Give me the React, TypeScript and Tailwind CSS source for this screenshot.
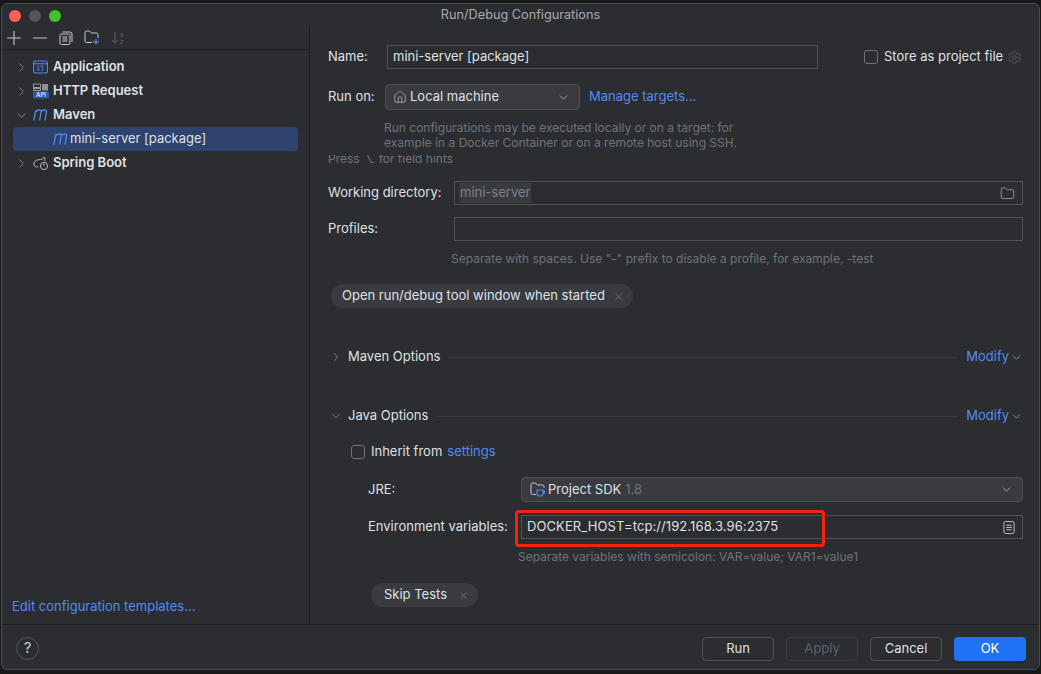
import { ChevronDown, ChevronRight, Folder, House, Minus, Plus, Settings, X } from 'lucide-react';
import type { ReactNode } from 'react';

const inputClass = 'h-[24px] border border-[#4e5157] bg-[#2b2d30] flex items-center';

function MavenIcon({ className }: { className?: string }) {
  return (
    <svg viewBox="0 0 16 12" className={className} fill="none" stroke="#548af7" strokeWidth="1.3">
      <path d="M0.800 11.500 2.800 1.500" />
      <path d="M2.800 2.500C4.500 .6 8.600 .2 8.100 3L6.600 11.500" />
      <path d="M8.200 2.500C9.900 .6 14 .2 13.500 3L12 11.500" />
    </svg>
  );
}

function ApplicationIcon() {
  return (
    <svg viewBox="0 0 16 14" className="w-[15px] h-[14px]" fill="none">
      <rect x="0.600" y="0.600" width="14.800" height="12.800" rx="2" fill="#25324d" stroke="#548af7" strokeWidth="1.100" />
      <path d="M1 3.500h14" stroke="#548af7" strokeWidth="1.100" />
      <path d="M4 6h2M8 6h3M5 8h2M9 8h2M4 10h3M9 10h2" stroke="#8a93a6" strokeWidth="1" />
    </svg>
  );
}

function HttpIcon() {
  return (
    <svg viewBox="0 0 16 16" className="w-[16px] h-[16px]">
      <path d="M0.500 1h7v3.500h-7zM0.500 5.500h7v2h-7z" fill="none" stroke="#b4b8bf" strokeWidth="0.800" />
      <rect x="9" y="1" width="6" height="6.500" fill="#8c9097" />
      <rect x="0" y="8.600" width="16" height="7" rx="0.500" fill="#2e5aa8" />
      <text x="8" y="14.200" textAnchor="middle" fontSize="6" fontWeight="700" fontFamily="Inter, sans-serif" fill="#c9d8f5">API</text>
    </svg>
  );
}

function SpringIcon() {
  return (
    <svg viewBox="0 0 16 14" className="w-[16px] h-[14px]" fill="none" stroke="#b4b8bf" strokeWidth="1">
      <path d="M1 9c-.6-3 2-5.300 5-5.300 2.500 0 4.500-1 5.300-2.700.7 1.500.8 3 .4 4.300" />
      <path d="M1 9c.5 1.500 2 2 4 1.800" />
      <circle cx="11" cy="10" r="3.600" />
      <path d="M11 7.600V10" />
    </svg>
  );
}

function TreeRow({ label, icon, open }: { label: string; icon: ReactNode; open?: boolean }) {
  return (
    <div className="h-[24px] flex items-center pl-[12px] text-[13px] font-semibold text-[#dfe1e5]">
      <span className="w-[19px] flex justify-start">
        {open
          ? <ChevronDown size={15} strokeWidth={1.2} className="text-[#9da0a8]" />
          : <ChevronRight size={15} strokeWidth={1.2} className="text-[#9da0a8]" />}
      </span>
      <span className="w-[20px] flex items-center">{icon}</span>
      <span>{label}</span>
    </div>
  );
}

function Chip({ label, className }: { label: string; className: string }) {
  return (
    <div className={`h-[24px] rounded-full bg-[#393b40] flex items-center text-[13px] text-[#dfe1e5] pr-[9px] w-fit ${className}`}>
      <span>{label}</span>
      <X size={11} strokeWidth={1.2} className="text-[#8c8f96]" />
    </div>
  );
}

function Section({ label, open, className }: { label: string; open?: boolean; className: string }) {
  return (
    <div className={`h-[20px] flex items-center text-[13px] text-[#dfe1e5] ${className}`}>
      <span className="w-[20px] flex">
        {open
          ? <ChevronDown size={14} strokeWidth={1.2} className="text-[#9da0a8] ml-px" />
          : <ChevronRight size={14} strokeWidth={1.2} className="text-[#9da0a8] ml-px" />}
      </span>
      <span>{label}</span>
      <span className="flex-1 h-px bg-[#393b40] mx-[8px]" />
      <span className="text-[#548af7]">Modify</span>
      <ChevronDown size={13} strokeWidth={1.5} className="text-[#9da0a8] ml-px" />
    </div>
  );
}

function Button({ label, className }: { label: string; className: string }) {
  return (
    <div className={`w-[72px] h-[24px] rounded-[4px] flex items-center justify-center text-[13px] ${className}`}>{label}</div>
  );
}

export default function App() {
  return (
    <div className="w-[1041px] h-[674px] bg-[#17181a] pt-[3px] pl-[1px] pr-[1px] overflow-hidden font-['Inter',sans-serif] text-[13px]">
      <div className="h-[667px] rounded-[6px] border border-[#4a4c50] bg-[#2b2d30] flex flex-col overflow-hidden">
        {/* title bar */}
        <div className="h-[22px] shrink-0 grid grid-cols-[1fr_auto_1fr] items-center">
          <div className="flex gap-[8px] pt-[1px] pl-[7px]">
            <span className="w-[12px] h-[12px] rounded-full bg-[#ff5f57]" />
            <span className="w-[12px] h-[12px] rounded-full bg-[#55565a]" />
            <span className="w-[12px] h-[12px] rounded-full bg-[#3fc22e]" />
          </div>
          <div className="text-[12.700px] text-[#a8abb0]">Run/Debug Configurations</div>
          <div />
        </div>

        <div className="flex-1 flex min-h-0">
          {/* sidebar */}
          <div className="w-[308px] shrink-0 border-r border-[#1e1f22] flex flex-col">
            <div className="h-[24px] shrink-0 border-b border-[#1e1f22] flex items-center pl-[1px] text-[#c5c8ce]">
              <Plus size={22} strokeWidth={1.2} className="shrink-0" />
              <Minus size={22} strokeWidth={1.2} className="shrink-0 ml-[4px]" />
              <svg viewBox="0 0 14 14" className="w-[14px] h-[14px] ml-[8px]" fill="none" stroke="#c5c8ce" strokeWidth="1">
                <path d="M3.500 1h7.500a2 2 0 0 1 2 2v8" />
                <rect x="1" y="3" width="10" height="10.500" rx="1.500" />
                <path d="M3.500 6h5M3.500 8h5M3.500 10h5" />
              </svg>
              <svg viewBox="0 0 16 15" className="w-[16px] h-[15px] ml-[11px]" fill="none" stroke="#c5c8ce" strokeWidth="1">
                <path d="M8 12.500H2.500a1.500 1.500 0 0 1-1.500-1.500V2.500A1.500 1.500 0 0 1 2.500 1h3l2 2h5a1.500 1.500 0 0 1 1.500 1.500V8" />
                <path d="M12 9v5.500M9 11.800h6" stroke="#548af7" strokeWidth="1.200" />
              </svg>
              <svg viewBox="0 0 14 14" className="w-[14px] h-[14px] ml-[11px]" fill="none" stroke="#5f6268" strokeWidth="1">
                <path d="M4 1v11M1 9l3 3 3-3" />
                <text x="9" y="6" fontSize="6" fontFamily="Inter, sans-serif" stroke="none" fill="#5f6268">a</text>
                <text x="9" y="13" fontSize="6" fontFamily="Inter, sans-serif" stroke="none" fill="#5f6268">z</text>
              </svg>
            </div>
            <div className="flex-1 pt-[5px]">
              <TreeRow label="Application" icon={<ApplicationIcon />} />
              <TreeRow label="HTTP Request" icon={<HttpIcon />} />
              <TreeRow label="Maven" open icon={<MavenIcon className="w-[16px] h-[12px]" />} />
              <div className="h-[24px] mx-[11px] pl-[40px] rounded-[4px] bg-[#2e436e] flex items-center text-[13px] text-[#dfe1e5]">
                <MavenIcon className="w-[16px] h-[12px] mr-px" />
                <span>mini-server [package]</span>
              </div>
              <TreeRow label="Spring Boot" icon={<SpringIcon />} />
            </div>
            <div className="h-[39px] shrink-0 pl-[10px] pt-[4px] flex items-center text-[#548af7]">Edit configuration templates...</div>
          </div>

          {/* form */}
          <div className="flex-1 min-w-0 pl-[18px] pr-[16px]">
            <div className="mt-[19px] flex items-center">
              <span className="w-[59px] text-[#dfe1e5]">Name:</span>
              <div className={`${inputClass} w-[431px] pl-[5px] text-[#dfe1e5]`}>mini-server [package]</div>
              <span className="w-[14px] h-[14px] ml-[46px] shrink-0 rounded-[3px] border border-[#6f737a]" />
              <span className="ml-[6px] text-[#dfe1e5] whitespace-nowrap">Store as project file</span>
              <Settings size={15} strokeWidth={1} className="ml-[4px] shrink-0 text-[#6f737a]" />
            </div>

            <div className="mt-[15px] flex items-center">
              <span className="w-[57px] text-[#dfe1e5]">Run on:</span>
              <div className="w-[195px] h-[26px] rounded-[4px] border border-[#4e5157] bg-[#393b40] flex items-center pl-[7px] pr-[9px] text-[#dfe1e5]">
                <House size={14} strokeWidth={1.1} className="text-[#c5c8ce] mr-[3px]" />
                <span className="flex-1">Local machine</span>
                <ChevronDown size={13} strokeWidth={1.4} className="text-[#c5c8ce]" />
              </div>
              <span className="ml-[9px] text-[#548af7]">Manage targets...</span>
            </div>

            <div className="mt-[10px] ml-[56px] text-[12px] leading-[15px] text-[#6f737a]">
              <p>Run configurations may be executed locally or on a target: for</p>
              <p>example in a Docker Container or on a remote host using SSH.</p>
            </div>
            <div className="h-[11px] overflow-hidden flex items-end text-[12px] leading-[15px] text-[#6f737a] mt-[5px]">
              <span>Press ⌥ for field hints</span>
            </div>

            <div className="mt-[15px] flex items-center">
              <span className="w-[126px] text-[#dfe1e5]">Working directory:</span>
              <div className={`${inputClass} flex-1 pl-[4px] pr-[7px] justify-between`}>
                <span className="bg-[#393b40] text-[#7f828a] px-px">mini-server</span>
                <Folder size={15} strokeWidth={1} className="text-[#c5c8ce]" />
              </div>
            </div>

            <div className="mt-[12px] flex items-center">
              <span className="w-[126px] text-[#dfe1e5]">Profiles:</span>
              <div className={`${inputClass} flex-1`} />
            </div>

            <div className="mt-[10px] ml-[123px] text-[12px] leading-[15px] text-[#6f737a]">
              Separate with spaces. Use "-" prefix to disable a profile, for example, -test
            </div>

            <Chip label="Open run/debug tool window when started" className="mt-[18px] ml-[3px] pl-[11px] gap-[8px]" />

            <Section label="Maven Options" className="mt-[39px]" />
            <Section label="Java Options" open className="mt-[39px]" />

            <div className="mt-[16px] ml-[23px] flex items-center h-[20px]">
              <span className="w-[14px] h-[14px] rounded-[3px] border border-[#6f737a]" />
              <span className="ml-[6px] text-[#dfe1e5]">Inherit from</span>
              <span className="ml-[5px] text-[#548af7]">settings</span>
            </div>

            <div className="mt-[15px] ml-[40px] flex items-center">
              <span className="w-[153px] text-[#dfe1e5]">JRE:</span>
              <div className="flex-1 h-[25px] rounded-[4px] border border-[#4e5157] bg-[#393b40] flex items-center pl-[8px] pr-[9px] text-[#dfe1e5]">
                <svg viewBox="0 0 16 15" className="w-[16px] h-[15px] mr-[2px]" fill="none" stroke="#c5c8ce" strokeWidth="1">
                  <path d="M6 12.500H2.500A1.500 1.500 0 0 1 1 11V2.500A1.500 1.500 0 0 1 2.500 1h3l2 2h5A1.500 1.500 0 0 1 14 4.500V6" />
                  <path d="M7 8h6v3.500a2.500 2.500 0 0 1-2.500 2.500h-1A2.500 2.500 0 0 1 7 11.500zM13 9h1.500v2H13" stroke="#548af7" strokeWidth="1.200" />
                </svg>
                <span>Project SDK</span>
                <span className="ml-[4px] text-[#6f737a]">1.8</span>
                <span className="flex-1" />
                <ChevronDown size={13} strokeWidth={1.4} className="text-[#c5c8ce]" />
              </div>
            </div>

            <div className="mt-[13px] ml-[40px] flex items-center">
              <span className="w-[153px] text-[#dfe1e5]">Environment variables:</span>
              <div className="relative flex-1">
                <div className={`${inputClass} pl-[5px] pr-[7px] justify-between text-[#dfe1e5]`}>
                  <span className="tracking-[0.09px]">DOCKER_HOST=tcp://192.168.3.96:2375</span>
                  <svg viewBox="0 0 12 14" className="w-[12px] h-[13px]" fill="none" stroke="#c5c8ce" strokeWidth="1">
                    <rect x="0.500" y="0.500" width="11" height="13" rx="2" />
                    <path d="M3 4.500h6M3 7h6M3 9.500h6" />
                  </svg>
                </div>
                <div className="absolute left-[-6px] top-[-5px] w-[310px] h-[37px] rounded-[4px] border-[3px] border-[#f6220d]" />
              </div>
            </div>

            <div className="mt-[10px] ml-[190px] text-[12px] leading-[15px] text-[#6f737a]">
              Separate variables with semicolon: VAR=value; VAR1=value1
            </div>

            <Chip label="Skip Tests" className="mt-[19px] ml-[43px] pl-[13px] gap-[11px]" />
          </div>
        </div>

        {/* footer */}
        <div className="h-[45px] shrink-0 border-t border-[#1e1f22] flex items-center pl-[14px] pr-[13px] pt-[3px]">
          <div className="w-[23px] h-[23px] rounded-full border border-[#55585e] flex items-center justify-center text-[15px] text-[#c5c8ce]">?</div>
          <div className="flex-1" />
          <div className="flex gap-[12px]">
            <Button label="Run" className="border border-[#4e5157] text-[#dfe1e5]" />
            <Button label="Apply" className="border border-[#393b40] text-[#5f6268]" />
            <Button label="Cancel" className="border border-[#4e5157] text-[#dfe1e5]" />
            <Button label="OK" className="bg-[#1f74f5] text-white" />
          </div>
        </div>
      </div>
    </div>
  );
}
